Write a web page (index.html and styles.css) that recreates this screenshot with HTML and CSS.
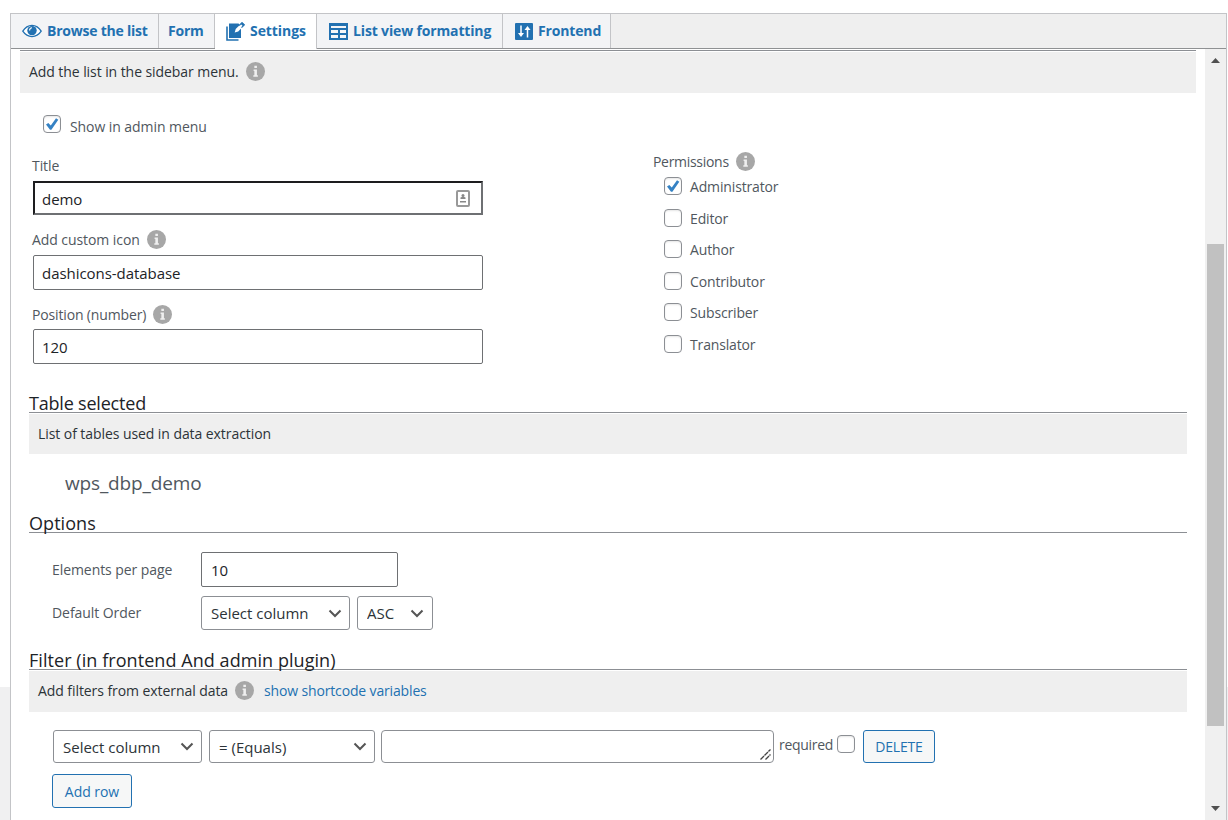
FILE: index.html
```
<!DOCTYPE html>
<html lang="en">
<head>
    <meta charset="UTF-8">
    <meta name="viewport" content="width=device-width, initial-scale=1.0">
    <title>List settings</title>
    <link rel="stylesheet" href="styles.css">
</head>
<body>
    <svg class="sprite" width="0" height="0">
        <symbol id="icon-info" viewBox="0 0 20 20">
            <circle cx="10" cy="10" r="10" fill="#a7a7a7"/>
            <path d="M8.8 4h2.7v2.3H8.8zM8 8h3.5v6h1v1.5H7.7V14h1.1V9.5H8z" fill="#efefef"/>
        </symbol>
    </svg>

    <div class="panel">
        <nav class="tabs">
            <a class="tab tab-browse" href="#">
                <svg width="20" height="14" viewBox="0 0 20 14">
                    <path d="M.8 7.2C3.2 3.2 6.4 1.3 10 1.3s6.8 1.9 9.2 5.9c-2.4 3.6-5.6 5.4-9.2 5.4S3.2 10.8.8 7.2z" fill="#fff" stroke="#2271b1" stroke-width="1.3"/>
                    <circle cx="10" cy="6.6" r="4.7" fill="#2271b1"/>
                    <path d="M10 3.8a2.6 2.6 0 0 0-2.4 2.6" fill="none" stroke="#fff" stroke-width="1.1"/>
                </svg>
                <span>Browse the list</span>
            </a>
            <a class="tab tab-form" href="#"><span>Form</span></a>
            <a class="tab tab-settings active" href="#">
                <svg width="19" height="19" viewBox="0 0 19 19">
                    <path d="M1 4.5V18h11.5" fill="none" stroke="#2271b1" stroke-width="1.6"/>
                    <path d="M3 1.5h12V16H3z" fill="#2271b1"/>
                    <path d="M12.500 1h6v6h-3z" fill="#fff"/>
                    <path d="M8.700 10.500l1-3.500L15 1.700l2.500 2.300-5.300 5.500z" fill="#fff"/>
                    <path d="M13.200 3.500L16 .7l2.300 2.100-2.800 2.900" fill="#fff" stroke="#2271b1" stroke-width="1.200"/>
                    <path d="M14.700 2L16.200.4l2.300 2.200L17 4.200z" fill="#2271b1"/>
                </svg>
                <span>Settings</span>
            </a>
            <a class="tab tab-view" href="#">
                <svg width="19" height="17" viewBox="0 0 19 17">
                    <path d="M0 0h19v17H0z" fill="#2271b1"/>
                    <path d="M2 3h15v2H2zM2 7h7v3H2zM11 7h6v3h-6zM2 12h7v3H2zM11 12h6v3h-6z" fill="#f5f6f8"/>
                </svg>
                <span>List view formatting</span>
            </a>
            <a class="tab tab-frontend" href="#">
                <svg width="18" height="17" viewBox="0 0 18 17">
                    <rect width="18" height="17" rx="1" fill="#2271b1"/>
                    <path d="M6 2.500V12M12.500 14.500V5" fill="none" stroke="#fff" stroke-width="1.500"/>
                    <path d="M3 10h6l-3 4zM9.500 7h6l-3-4z" fill="#fff"/>
                </svg>
                <span>Frontend</span>
            </a>
        </nav>

        <div class="panel-body">
            <div class="content">
                <div class="info-bar info-bar-top">
                    <span>Add the list in the sidebar menu.</span>
                    <svg class="info"><use href="#icon-info"/></svg>
                </div>

                <label class="check show-menu"><input type="checkbox" checked><span>Show in admin menu</span></label>

                <div class="columns">
                    <div class="col-fields">
                        <div class="field-label"><span>Title</span></div>
                        <div class="title-field">
                            <input class="text-input title-input" type="text" value="demo">
                            <svg class="autofill" width="14" height="17" viewBox="0 0 14 17">
                                <rect x="1" y="1" width="12" height="15" rx="1" fill="#fff" stroke="#999" stroke-width="2"/>
                                <circle cx="7" cy="5.5" r="1.5" fill="#888"/>
                                <path d="M4.5 9V7.500L7 6.500l2.500 1V9zM4 11h6v1.500H4z" fill="#888"/>
                            </svg>
                        </div>
                        <div class="field-label label-icon">
                            <span>Add custom icon</span>
                            <svg class="info"><use href="#icon-info"/></svg>
                        </div>
                        <input class="text-input" type="text" value="dashicons-database">
                        <div class="field-label label-position">
                            <span>Position (number)</span>
                            <svg class="info"><use href="#icon-info"/></svg>
                        </div>
                        <input class="text-input position-input" type="text" value="120">
                    </div>

                    <div class="col-permissions">
                        <div class="permissions-title">
                            <span>Permissions</span>
                            <svg class="info"><use href="#icon-info"/></svg>
                        </div>
                        <label class="check"><input type="checkbox" checked><span>Administrator</span></label>
                        <label class="check"><input type="checkbox"><span>Editor</span></label>
                        <label class="check"><input type="checkbox"><span>Author</span></label>
                        <label class="check"><input type="checkbox"><span>Contributor</span></label>
                        <label class="check"><input type="checkbox"><span>Subscriber</span></label>
                        <label class="check"><input type="checkbox"><span>Translator</span></label>
                    </div>
                </div>

                <section class="block block-table">
                    <h3>Table selected</h3>
                    <div class="info-bar"><span>List of tables used in data extraction</span></div>
                    <div class="table-name">wps_dbp_demo</div>
                </section>

                <section class="block block-options">
                    <h3>Options</h3>
                    <div class="option-row">
                        <span class="option-label">Elements per page</span>
                        <input class="text-input small-input" type="text" value="10">
                    </div>
                    <div class="option-row">
                        <span class="option-label">Default Order</span>
                        <select class="select-column"><option>Select column</option></select>
                        <select class="select-order"><option>ASC</option></select>
                    </div>
                </section>

                <section class="block block-filter">
                    <h3>Filter (in frontend And admin plugin)</h3>
                    <div class="info-bar">
                        <span>Add filters from external data</span>
                        <svg class="info"><use href="#icon-info"/></svg>
                        <a class="shortcode-link" href="#">show shortcode variables</a>
                    </div>
                    <div class="filter-row">
                        <select class="select-column"><option>Select column</option></select>
                        <select class="select-operator"><option>= (Equals)</option></select>
                        <div class="filter-value">
                            <textarea rows="1"></textarea>
                            <svg class="grip" width="11" height="11" viewBox="0 0 11 11"><path d="M.5 10.5l10-10M5.5 10.5l5-5" stroke="#444" stroke-width="1.3" stroke-dasharray="5 .6"/></svg>
                        </div>
                        <label class="required"><span>required</span><input type="checkbox"></label>
                        <button class="button button-delete" type="button">DELETE</button>
                    </div>
                    <button class="button button-add" type="button">Add row</button>
                </section>
            </div>

            <div class="scrollbar">
                <svg class="arrow" width="9" height="5" viewBox="0 0 9 5"><path d="M0 5l4.500-5L9 5z" fill="#505050"/></svg>
                <div class="thumb"></div>
                <svg class="arrow" width="9" height="5" viewBox="0 0 9 5"><path d="M0 0l4.500 5L9 0z" fill="#505050"/></svg>
            </div>
        </div>
    </div>
</body>
</html>
```
FILE: styles.css
```
* {
    box-sizing: border-box;
}

body {
    margin: 0;
    height: 820px;
    padding: 13px 1px 0 10px;
    overflow: hidden;
    background: linear-gradient(#fff 687px, #f0f0f1 687px);
    color: #50575e;
    font-family: "Open Sans", "Noto Sans", sans-serif;
    font-size: 14px;
    line-height: 20px;
    letter-spacing: -0.07px;
}

input,
select,
textarea,
button {
    margin: 0;
    font-family: inherit;
    font-size: 15px;
    letter-spacing: -0.05px;
}

.sprite {
    position: absolute;
}

.panel {
    height: 807px;
    border: 1px solid #c3c4c7;
    border-bottom: 0;
    background: #fff;
    display: flex;
    flex-direction: column;
}

/* tabs */
.tabs {
    display: flex;
    flex: none;
    height: 35px;
    background: #efefef;
    border-bottom: 1px solid #8f9193;
}

.tab {
    display: flex;
    align-items: center;
    height: 34px;
    border-right: 1px solid #c3c4c7;
    background: #f3f4f6;
    color: #2271b1;
    font-weight: 700;
    text-decoration: none;
    white-space: nowrap;
}

.tab svg {
    flex: none;
}

.tab-browse {
    width: 148px;
    padding-left: 11px;
    gap: 5px;
    letter-spacing: -0.23px;
}

.tab-form {
    width: 56px;
    padding-left: 9px;
    letter-spacing: -0.2px;
}

.tab-settings {
    width: 102px;
    padding: 0 0 1px 11px;
    gap: 5px;
}

.tab-view {
    width: 186px;
    padding-left: 12px;
    gap: 5px;
    letter-spacing: -0.15px;
}

.tab-frontend {
    width: 108px;
    padding-left: 12px;
    gap: 5px;
    letter-spacing: -0.15px;
}

.tab.active {
    height: 35px;
    background: #fff;
}

/* body of the panel */
.panel-body {
    display: flex;
    flex: 1;
    min-height: 0;
}

.content {
    flex: 1;
    padding: 1px 9px 0;
    overflow: hidden;
}

.info-bar {
    display: flex;
    align-items: center;
    height: 41px;
    padding: 0 9px 1px;
    background: #efefef;
    color: #2c3338;
}

.info-bar-top {
    height: 43px;
    border-top: 1px solid #8c8f94;
    box-shadow: inset 0 1px #fff;
    padding-bottom: 0;
}

.info {
    flex: none;
    width: 19px;
    height: 19px;
    margin: 0 0 1px 7px;
}

.check {
    display: flex;
    align-items: center;
    gap: 8px;
    height: 18px;
}

input[type="checkbox"] {
    appearance: none;
    flex: none;
    width: 18px;
    height: 18px;
    border: 1px solid #8c8f94;
    border-radius: 4px;
    background: #fff;
    box-shadow: inset 0 1px 2px rgba(0, 0, 0, 0.1);
}

input[type="checkbox"]:checked {
    background: #fff url("data:image/svg+xml,%3Csvg xmlns='http://www.w3.org/2000/svg' viewBox='0 0 16 16'%3E%3Cpath d='M2 8.500l2.300-1.600 2.500 2.600L12 2.300l2.300 1.400-6.900 10H6z' fill='%233582c4'/%3E%3C/svg%3E") center / 16px 16px no-repeat;
}

.show-menu {
    margin: 22px 0 0 23px;
    gap: 9px;
}

.show-menu span {
    padding-top: 5px;
}

.columns {
    display: flex;
    height: 231px;
    margin-top: 17px;
    padding-left: 12px;
}

.col-fields {
    width: 621px;
    padding-top: 6px;
}

.field-label {
    display: flex;
    align-items: center;
    height: 20px;
}

.label-icon {
    margin-top: 15px;
}

.label-position {
    margin-top: 15px;
    letter-spacing: -0.15px;
}

.text-input {
    display: block;
    width: 450px;
    height: 35px;
    margin: 5px 0 0 1px;
    padding: 1px 8px 0;
    border: 1px solid #6e7073;
    border-radius: 2px;
    background: #fff;
    color: #1d2327;
}

.position-input {
    margin-top: 4px;
}

.title-field {
    position: relative;
    width: 451px;
}

.title-input {
    height: 34px;
    padding: 2px 7px 0;
    border: 2px solid;
    border-color: #1d1d1f #6e7073 #6e7073 #1d1d1f;
    border-radius: 0;
}

.autofill {
    position: absolute;
    right: 13px;
    top: 9px;
}

.permissions-title {
    display: flex;
    align-items: center;
    height: 20px;
    margin: 2px 0 5px;
    letter-spacing: -0.3px;
}

.col-permissions .check {
    height: 18px;
    margin: 0 0 13.6px 11px;
    letter-spacing: -0.15px;
}

.col-permissions .check span {
    padding-top: 2px;
}

/* sections */
.block {
    padding: 0 9px;
}

h3 {
    height: 32px;
    margin: 0;
    padding-top: 11px;
    border-bottom: 1px solid #8c8f94;
    color: #1d2327;
    font-size: 18px;
    font-weight: 400;
    line-height: 22px;
    letter-spacing: 0.06px;
}

.block .info-bar {
    margin-top: 1px;
}

.block-table {
    height: 120px;
}

.block-table h3 {
    letter-spacing: -0.2px;
}

.block-table .info-bar {
    height: 40px;
    padding-bottom: 0;
}

.table-name {
    padding: 15px 0 0 36px;
    font-size: 19px;
    line-height: 28px;
    letter-spacing: -0.15px;
}

.block-options {
    height: 137px;
}

.option-row {
    display: flex;
    align-items: center;
    height: 35px;
    margin: 19px 0 0 23px;
}

.option-row + .option-row {
    margin-top: 9px;
    height: 34px;
}

.option-label {
    width: 149px;
}

.small-input {
    width: 197px;
    margin: 0;
    padding-left: 9px;
}

select {
    appearance: none;
    height: 34px;
    padding: 0 24px 1px 9px;
    border: 1px solid #8c8f94;
    border-radius: 3px;
    background: #fff url("data:image/svg+xml,%3Csvg xmlns='http://www.w3.org/2000/svg' width='14' height='9'%3E%3Cpath d='M1.500 1.500L7 7l5.500-5.500' fill='none' stroke='%23555' stroke-width='2'/%3E%3C/svg%3E") right 7px center no-repeat;
    color: #2c3338;
    letter-spacing: 0;
}

.select-column {
    width: 149px;
}

.select-order {
    width: 76px;
    margin-left: 7px;
    background-position: right 8px center;
}

.shortcode-link {
    margin-left: 10px;
    color: #2271b1;
    text-decoration: none;
    letter-spacing: -0.15px;
}

.filter-row {
    display: flex;
    margin: 18px 0 0 24px;
}

.select-operator {
    width: 166px;
    margin: 0 6px 0 7px;
}

.filter-value {
    position: relative;
    width: 393px;
    height: 33px;
}

textarea {
    display: block;
    width: 100%;
    height: 33px;
    border: 1px solid #8c8f94;
    border-radius: 4px;
    resize: none;
}

.grip {
    position: absolute;
    right: 3px;
    bottom: 3px;
}

.required {
    display: flex;
    align-items: center;
    justify-content: space-between;
    width: 76px;
    height: 28px;
    margin: 0 8px 0 5px;
    letter-spacing: -0.3px;
}

.required span {
    padding-top: 2px;
}

.button {
    display: block;
    height: 34px;
    padding: 0;
    border: 1px solid #2271b1;
    border-radius: 3px;
    background: #f6f7f7;
    color: #2271b1;
    font-size: 14px;
}

.filter-row select,
.button-delete {
    height: 33px;
}

.filter-row select {
    padding-top: 1px;
    padding-bottom: 0;
}

.button-delete {
    width: 72px;
    letter-spacing: -0.2px;
}

.button-add {
    width: 80px;
    margin: 11px 0 0 23px;
}

/* scrollbar */
.scrollbar {
    display: flex;
    flex-direction: column;
    align-items: center;
    width: 21px;
    padding: 9px 0;
    background: #f0f0f0;
}

.arrow {
    flex: none;
}

.thumb {
    width: 17px;
    height: 482px;
    margin: 181px 0 auto;
    background: #c1c1c1;
}
```
